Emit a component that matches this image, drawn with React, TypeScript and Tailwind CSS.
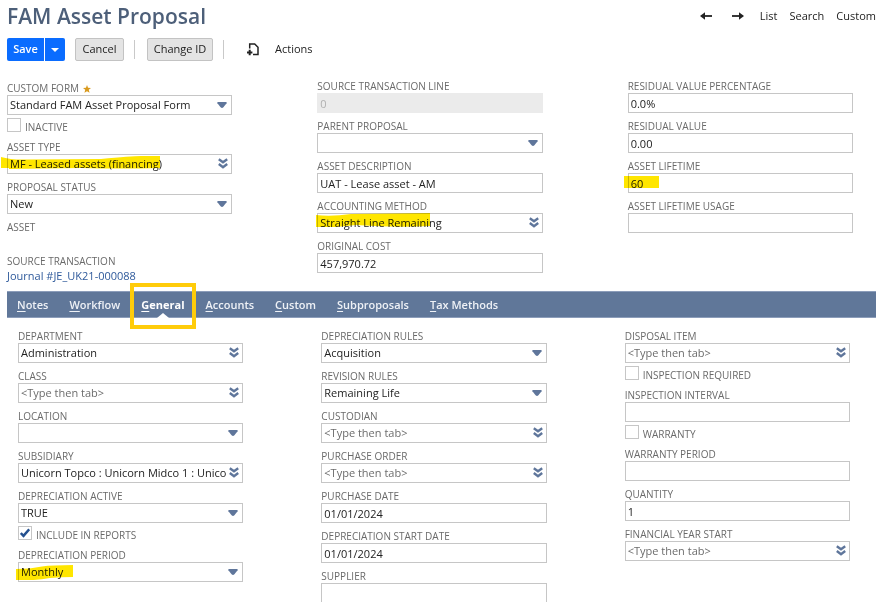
import React, { useId } from "react";

const boxClass =
  "block h-5 w-full min-w-0 rounded-none border border-[#c6c6c6] bg-white pl-[2px] text-[11px] text-[#222] outline-none";

function Label({ id, required, children }: { id?: string; required?: boolean; children: React.ReactNode }) {
  return (
    <label htmlFor={id} className="flex h-[13px] items-center text-[10px] leading-[13px] whitespace-nowrap text-[#6a6a6a] uppercase">
      {children}
      {required && (
        <svg viewBox="0 0 10 10" className="ml-1 size-2" fill="#d99a1e" aria-hidden="true">
          <path d="M5 0l1.3 3.3L10 3.7 7.2 6l1 3.8L5 7.8 1.8 9.8l1-3.8L0 3.7l3.7-.4z" />
        </svg>
      )}
    </label>
  );
}

function Triangle() {
  return (
    <svg viewBox="0 0 10 6" className="h-[6px] w-[10px]" fill="#5f769b" aria-hidden="true">
      <path d="M1 0h8q1 0 .6 1.200L6.400 5.300Q5 6.600 3.600 5.300L.4 1.200Q0 0 1 0z" />
    </svg>
  );
}

function DoubleChevron() {
  return (
    <svg viewBox="0 0 10 11" className="h-[11px] w-[10px]" fill="none" stroke="#5f769b" strokeWidth="2.400" aria-hidden="true">
      <path d="M.8 1.200L5 4.200l4.200-3M.8 6L5 9.200 9.200 6" />
    </svg>
  );
}

type FieldProps = {
  label: string;
  value?: string;
  required?: boolean;
  disabled?: boolean;
  mark?: React.ReactNode;
};

function TextField({ label, value = "", disabled, mark }: FieldProps) {
  const id = useId();
  return (
    <div className="pt-[7px]">
      <Label id={id}>{label}</Label>
      <div className="relative">
        <input
          id={id}
          type="text"
          defaultValue={value}
          disabled={disabled}
          className={disabled ? "block h-5 w-full min-w-0 border border-[#ebebeb] bg-[#ebebeb] pl-[2px] text-[11px] text-[#b0b0b0]" : boxClass}
        />
        {mark}
      </div>
    </div>
  );
}

function SelectField({ label, value = "", required, mark }: FieldProps) {
  const id = useId();
  return (
    <div className="pt-[7px]">
      <Label id={id} required={required}>{label}</Label>
      <div className="relative">
        <select id={id} defaultValue={value} className={`${boxClass} appearance-none`}>
          <option value={value}>{value}</option>
        </select>
        <span className="pointer-events-none absolute top-[7px] right-[5px]">
          <Triangle />
        </span>
        {mark}
      </div>
    </div>
  );
}

function LookupField({ label, value, mark }: FieldProps) {
  const id = useId();
  return (
    <div className="pt-[7px]">
      <Label id={id}>{label}</Label>
      <div className="relative">
        <div className="flex h-5 border border-[#c6c6c6] bg-white">
          <input
            id={id}
            type="text"
            defaultValue={value}
            placeholder="<Type then tab>"
            className="min-w-0 flex-1 pl-[2px] text-[11px] text-[#222] outline-none placeholder:text-[#6c6c6c]"
          />
          <button type="button" aria-label={`Open ${label}`} className="flex w-4 items-center justify-center pb-px">
            <DoubleChevron />
          </button>
        </div>
        {mark}
      </div>
    </div>
  );
}

function CheckField({ label, checked }: { label: string; checked?: boolean }) {
  const id = useId();
  return (
    <div className="flex h-[19px] gap-1 pt-[3px]">
      <span className="relative size-[14px]">
        <input
          id={id}
          type="checkbox"
          defaultChecked={checked}
          className="peer block size-[14px] appearance-none border border-[#c6c6c6] bg-white"
        />
        <svg
          viewBox="0 0 10 10"
          className="pointer-events-none absolute top-[2px] left-[2px] hidden size-[10px] peer-checked:block"
          fill="none"
          stroke="#24508f"
          strokeWidth="2.500"
          aria-hidden="true"
        >
          <path d="M.8 5l2.700 2.800L9.200 1.200" />
        </svg>
      </span>
      <div className="pt-[3px]">
        <Label id={id}>{label}</Label>
      </div>
    </div>
  );
}

function Mark({ className, d, box }: { className: string; d: string; box: string }) {
  return (
    <svg
      viewBox={box}
      preserveAspectRatio="none"
      className={`pointer-events-none absolute mix-blend-multiply ${className}`}
      fill="#ffe600"
      aria-hidden="true"
    >
      <path d={d} />
    </svg>
  );
}

const tabs = ["Notes", "Workflow", "General", "Accounts", "Custom", "Subproposals", "Tax Methods"];

function Tabs() {
  return (
    <nav className="ml-[7px] flex h-[27px] items-center gap-[21px] border-y border-[#8c9dba] bg-[#607799] pl-[10px] text-[11px] font-semibold text-[#eef1f6]">
      {tabs.map((tab) => {
        const active = tab === "General";
        return (
          <a
            key={tab}
            href={`#${tab}`}
            aria-current={active ? "page" : undefined}
            className={`relative flex h-full items-center pt-[2px] whitespace-nowrap ${active ? "font-bold text-white" : ""}`}
          >
            <span>
              <span className="underline underline-offset-2">{tab[0]}</span>
              {tab.slice(1)}
            </span>
            {active && (
              <>
                <svg viewBox="0 0 12 5" className="absolute bottom-[-1px] left-1/2 h-[5px] w-3 -translate-x-1/2" fill="#fff" aria-hidden="true">
                  <path d="M0 5l6-5 6 5z" />
                </svg>
                <span className="pointer-events-none absolute -inset-x-[11px] -top-[9px] -bottom-[12px] border-4 border-[#ffcc0a]" />
              </>
            )}
          </a>
        );
      })}
    </nav>
  );
}

function Arrow({ flip }: { flip?: boolean }) {
  return (
    <svg viewBox="0 0 12 8" className={`h-2 w-3 ${flip ? "rotate-180" : ""}`} aria-hidden="true">
      <path d="M3 4h9" stroke="#222" strokeWidth="1.800" />
      <path d="M0 4L5 .2v7.600z" fill="#222" />
    </svg>
  );
}

const greyButton =
  "h-[23px] rounded-[2px] border border-[#c3c3c3] bg-[#e4e4e4] text-[11px] font-medium whitespace-nowrap text-[#222]";

export default function App() {
  return (
    <main className="h-screen overflow-hidden bg-white font-['Open_Sans','Noto_Sans',sans-serif] text-[#222]">
      <header className="flex h-8 items-center justify-between pl-[7px]">
        <h1 className="text-[21px] leading-8 font-semibold whitespace-nowrap text-[#4d5f79]">FAM Asset Proposal</h1>
        <nav className="flex items-center gap-3 text-[11px] font-medium whitespace-nowrap">
          <button type="button" aria-label="Previous" className="mr-2"><Arrow /></button>
          <button type="button" aria-label="Next" className="mr-1"><Arrow flip /></button>
          <a href="#list">List</a>
          <a href="#search">Search</a>
          <a href="#custom">Custom</a>
        </nav>
      </header>

      <div className="flex h-[41px] items-start pt-[6px] pl-[7px]">
        <button type="button" className="h-[23px] w-[37px] rounded-l-[2px] bg-[#0a6cff] text-[11px] font-semibold text-white">Save</button>
        <button type="button" aria-label="More save options" className="ml-px flex h-[23px] w-5 items-center justify-center rounded-r-[2px] bg-[#0a6cff]">
          <svg viewBox="0 0 8 4" className="h-1 w-2" fill="#fff" aria-hidden="true">
            <path d="M0 0h8L4 4z" />
          </svg>
        </button>
        <button type="button" className={`${greyButton} ml-[10px] w-[49px]`}>Cancel</button>
        <span className="mt-[2px] ml-[10px] h-[19px] w-px bg-[#c9c9c9]" />
        <button type="button" className={`${greyButton} ml-3 w-[66px]`}>Change ID</button>
        <span className="mt-[2px] ml-[10px] h-[19px] w-px bg-[#c9c9c9]" />
        <button type="button" aria-label="New" className="ml-[22px] flex h-[23px] items-center">
          <svg viewBox="0 0 13 13" className="size-[13px]" fill="none" stroke="#222" strokeWidth="1.500" aria-hidden="true">
            <path d="M3.700 5.500V1h5l3.300 3.300v7.200H7" />
            <path d="M3.700 6.800v5.400M1 9.500h5.400" strokeWidth="2" />
          </svg>
        </button>
        <button type="button" className="ml-4 h-[23px] text-[11px] font-medium text-[#222]">Actions</button>
      </div>

      <section className="grid h-[218px] grid-cols-3 gap-x-[85px] pr-[23px] pl-[7px]">
        <div className="pt-[2px]">
          <SelectField label="Custom Form" required value="Standard FAM Asset Proposal Form" />
          <CheckField label="Inactive" />
          <LookupField
            label="Asset Type"
            value="MF - Leased assets (financing)"
            mark={
              <Mark
                className="top-[2px] left-[-6px] h-[13px] w-[159px]"
                box="0 0 159 13"
                d="M0 1Q10 4 26 3.500L100 3Q130 0 140 0H159V12Q120 13 80 12L8 13V12H0z"
              />
            }
          />
          <SelectField label="Proposal Status" value="New" />
          <div className="pt-[7px]"><Label>Asset</Label></div>
          <div className="pt-[21px]">
            <Label>Source Transaction</Label>
            <a href="#journal" className="block text-[11px] leading-[15px] whitespace-nowrap text-[#2f5a9b]">Journal #JE_UK21-000088</a>
          </div>
        </div>
        <div>
          <TextField label="Source Transaction Line" value="0" disabled />
          <SelectField label="Parent Proposal" />
          <TextField label="Asset Description" value="UAT - Lease asset - AM" />
          <LookupField
            label="Accounting Method"
            value="Straight Line Remaining"
            mark={
              <Mark
                className="top-0 left-[-1px] h-[14px] w-[114px]"
                box="0 0 114 14"
                d="M0 2Q15 4 35 1L114 0V13Q80 15 40 12L20 14H0z"
              />
            }
          />
          <TextField label="Original Cost" value="457,970.72" />
        </div>
        <div>
          <TextField label="Residual Value Percentage" value="0.0%" />
          <TextField label="Residual Value" value="0.00" />
          <TextField
            label="Asset Lifetime"
            value="60"
            mark={<Mark className="top-[3px] left-[-4px] h-3 w-[35px]" box="0 0 35 12" d="M0 0H35V12H0z" />}
          />
          <TextField label="Asset Lifetime Usage" />
        </div>
      </section>

      <Tabs />

      <section className="grid grid-cols-3 gap-x-[78px] pt-[5px] pr-[26px] pl-[18px]">
        <div>
          <LookupField label="Department" value="Administration" />
          <LookupField label="Class" />
          <SelectField label="Location" />
          <LookupField label="Subsidiary" value="Unicorn Topco : Unicorn Midco 1 : Unicor" />
          <SelectField label="Depreciation Active" value="TRUE" />
          <CheckField label="Include in Reports" checked />
          <SelectField
            label="Depreciation Period"
            value="Monthly"
            mark={
              <Mark
                className="top-[3px] left-[-2px] h-[15px] w-[57px]"
                box="0 0 57 15"
                d="M0 4Q14 4 26 1.500Q36 0 57 0V12Q44 12 34 13Q18 16 0 15z"
              />
            }
          />
        </div>
        <div>
          <SelectField label="Depreciation Rules" value="Acquisition" />
          <SelectField label="Revision Rules" value="Remaining Life" />
          <LookupField label="Custodian" />
          <LookupField label="Purchase Order" />
          <TextField label="Purchase Date" value="01/01/2024" />
          <TextField label="Depreciation Start Date" value="01/01/2024" />
          <TextField label="Supplier" />
        </div>
        <div>
          <LookupField label="Disposal Item" />
          <CheckField label="Inspection Required" />
          <TextField label="Inspection Interval" />
          <CheckField label="Warranty" />
          <TextField label="Warranty Period" />
          <TextField label="Quantity" value="1" />
          <LookupField label="Financial Year Start" />
        </div>
      </section>
    </main>
  );
}
